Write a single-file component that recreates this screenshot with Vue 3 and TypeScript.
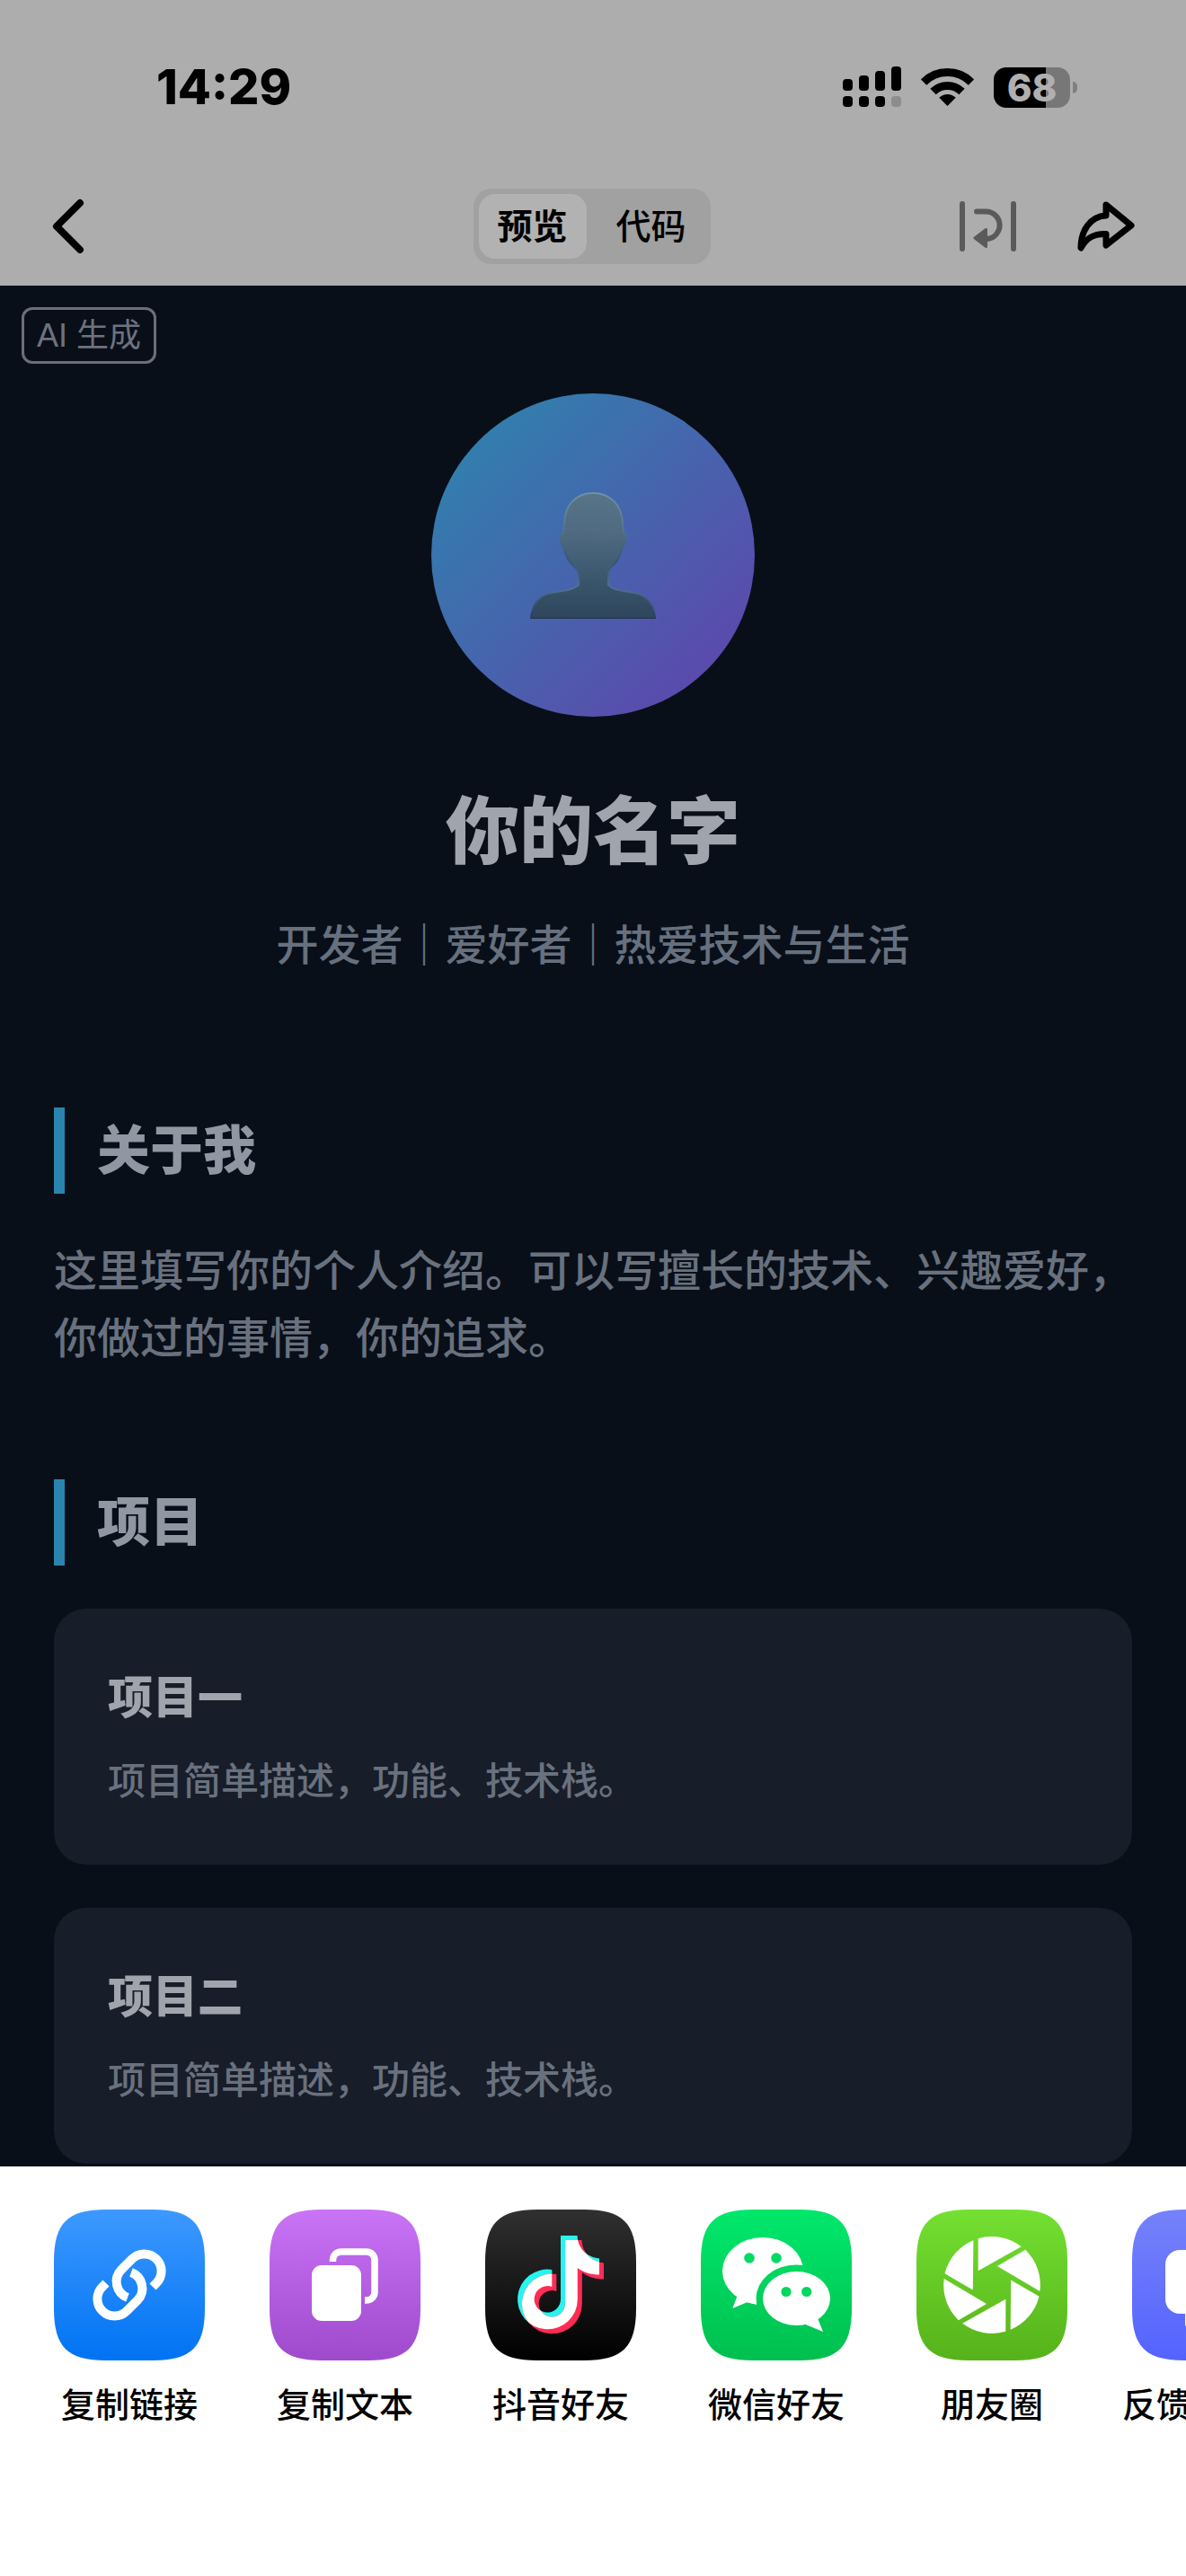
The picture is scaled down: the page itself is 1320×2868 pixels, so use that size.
<script setup lang="ts">
import { ref } from 'vue'

type IconName = 'link' | 'copy' | 'douyin' | 'wechat' | 'moments' | 'feedback'

interface ShareTarget {
  icon: IconName
  label: string
  from: string
  to: string
}

interface Project {
  title: string
  text: string
}

const tab = ref<'preview' | 'code'>('preview')

const signalBars = [
  { x: 0, y: 14 },
  { x: 18, y: 10 },
  { x: 36, y: 5 },
  { x: 54, y: 0 },
]

const projects: Project[] = [
  { title: '项目一', text: '项目简单描述，功能、技术栈。' },
  { title: '项目二', text: '项目简单描述，功能、技术栈。' },
]

const targets: ShareTarget[] = [
  { icon: 'link', label: '复制链接', from: '#3d99ff', to: '#0073f3' },
  { icon: 'copy', label: '复制文本', from: '#c973f6', to: '#9f4acd' },
  { icon: 'douyin', label: '抖音好友', from: '#303030', to: '#000000' },
  { icon: 'wechat', label: '微信好友', from: '#00e86c', to: '#00bf4f' },
  { icon: 'moments', label: '朋友圈', from: '#74e031', to: '#56b21a' },
  { icon: 'feedback', label: '反馈与建议', from: '#7682fa', to: '#5463ff' },
]

const tile = 'M0 58C0 15 15 0 58 0H110C153 0 168 15 168 58V110C168 153 153 168 110 168H58C15 168 0 153 0 110Z'
const chain = 'M82 98A19 19 0 0 1 75 67L87 55A19 19 0 0 1 114 82L110 86'
const note =
  'M84 29H102.5C103 43 113 53 127 54.5V72.5C118 72.5 109 70 102.8 65V100A33.4 33.4 0 1 1 74.3 66.9V86A14.7 14.7 0 1 0 84 100Z'
const blade = 'M68.7 32.2A54 54 0 0 1 116.7 41.3L68.7 68.3Z'
</script>

<template>
  <div class="screen">
    <header class="top">
      <div class="status">
        <span class="time">14:29</span>
        <div class="indicators">
          <svg class="signal" viewBox="0 0 65 46" aria-hidden="true">
            <g v-for="(bar, i) in signalBars" :key="bar.x">
              <rect :x="bar.x" :y="bar.y" width="11" :height="27 - bar.y" rx="4" />
              <rect :x="bar.x" y="33" width="11" height="12" rx="4" :fill="i === 3 ? '#8d8d8d' : '#000'" />
            </g>
          </svg>
          <svg class="wifi" viewBox="0 0 59 43" aria-hidden="true">
            <path d="M3 15.5A37.5 37.5 0 0 1 56 15.5" fill="none" stroke="#000" stroke-width="9" />
            <path d="M13.5 26A22.7 22.7 0 0 1 45.5 26" fill="none" stroke="#000" stroke-width="9" />
            <path d="M29.5 42L20.3 32.8A13 13 0 0 1 38.7 32.8Z" />
          </svg>
          <div class="battery"><span class="level">68</span><i class="nub"></i></div>
        </div>
      </div>
      <nav class="bar">
        <button class="icon-btn back" type="button" aria-label="返回">
          <svg width="48" height="72" viewBox="0 0 48 72">
            <path d="M38 10L12 36L38 62" fill="none" stroke="#000" stroke-width="8" stroke-linecap="round" stroke-linejoin="round" />
          </svg>
        </button>
        <div class="tabs">
          <button type="button" :class="['tab', { on: tab === 'preview' }]" @click="tab = 'preview'">预览</button>
          <button type="button" :class="['tab', { on: tab === 'code' }]" @click="tab = 'code'">代码</button>
        </div>
        <div class="actions">
          <button class="icon-btn" type="button" aria-label="自动换行">
            <svg width="72" height="72" viewBox="1061 215 72 72">
              <g fill="none" stroke="#5a5a5a" stroke-width="6" stroke-linecap="round">
                <path d="M1070 226V276M1127 226V276" />
                <path d="M1086 234.500H1096A15.300 15.300 0 0 1 1098 265" />
              </g>
              <path d="M1084 264L1096.500 254.500V273.500Z" fill="#5a5a5a" stroke="#5a5a5a" stroke-width="3" stroke-linejoin="round" />
            </svg>
          </button>
          <button class="icon-btn" type="button" aria-label="分享">
            <svg width="72" height="72" viewBox="1193 215 72 72">
              <path d="M1230 227L1258 250L1230 272V259.500C1216 259 1208 264 1202 275C1202 256 1212 240 1230 239Z" fill="none" stroke="#000" stroke-width="7" stroke-linejoin="round" />
            </svg>
          </button>
        </div>
      </nav>
    </header>

    <main class="page">
      <span class="badge">AI 生成</span>
      <section class="hero">
        <div class="avatar">
          <svg width="140" height="141" viewBox="0 0 140 141" aria-hidden="true">
            <defs>
              <linearGradient id="bust" x1="0" y1="0" x2="0" y2="1">
                <stop offset="0" stop-color="#587487" />
                <stop offset="0.3" stop-color="#506b82" />
                <stop offset="0.75" stop-color="#37536a" />
                <stop offset="1" stop-color="#2f465c" />
              </linearGradient>
              <linearGradient id="rim" x1="0" y1="0" x2="0" y2="1">
                <stop offset="0" stop-color="#6c93a6" />
                <stop offset="0.25" stop-color="#58788f" />
                <stop offset="0.55" stop-color="#35557a" />
                <stop offset="0.76" stop-color="#4f7394" />
                <stop offset="1" stop-color="#263c5c" />
              </linearGradient>
            </defs>
            <path
              d="M70 1C50 1 39 15 38 34L37 46C32 45 32 56 37 61C40 73 44 79 52 86C54 89 54 96 54 103C50 107 44 109 36 110L24 112C11 114 3 124 1 140H139C137 124 129 114 116 112L104 110C96 109 90 107 87 103C87 96 87 89 88 86C96 79 100 73 103 61C108 56 108 45 104 46L103 34C102 15 90 1 70 1Z"
              fill="url(#bust)"
              stroke="url(#rim)"
              stroke-width="2"
            />
          </svg>
        </div>
        <h1>你的名字</h1>
        <p class="tagline">开发者｜爱好者｜热爱技术与生活</p>
      </section>
      <section class="block">
        <h2>关于我</h2>
        <p class="about">这里填写你的个人介绍。可以写擅长的技术、兴趣爱好，你做过的事情，你的追求。</p>
      </section>
      <section class="block">
        <h2>项目</h2>
        <div class="cards">
          <article v-for="p in projects" :key="p.title" class="card">
            <h3>{{ p.title }}</h3>
            <p>{{ p.text }}</p>
          </article>
        </div>
      </section>
    </main>

    <footer class="sheet">
      <button v-for="t in targets" :key="t.icon" type="button" class="target">
        <svg class="tile" viewBox="0 0 168 168" aria-hidden="true">
          <defs>
            <linearGradient :id="'bg-' + t.icon" x1="0" y1="0" x2="0" y2="1">
              <stop offset="0" :stop-color="t.from" />
              <stop offset="1" :stop-color="t.to" />
            </linearGradient>
          </defs>
          <path :d="tile" :fill="`url(#bg-${t.icon})`" />
          <g v-if="t.icon === 'link'" fill="none" stroke="#fff" stroke-width="10">
            <path :d="chain" />
            <path :d="chain" transform="rotate(180 84 84)" />
          </g>
          <g v-else-if="t.icon === 'copy'">
            <rect x="47" y="62" width="55" height="62" rx="11" fill="#fff" />
            <path d="M70.500 58V56A9 9 0 0 1 79.500 47H108A9 9 0 0 1 117 56V92A9 9 0 0 1 108 101H106" fill="none" stroke="#fff" stroke-width="7.500" />
          </g>
          <g v-else-if="t.icon === 'douyin'">
            <clipPath id="note-clip"><path :d="note" /></clipPath>
            <path :d="note" fill="#28f3ee" />
            <path :d="note" transform="translate(5 5)" fill="#fe2c55" />
            <g clip-path="url(#note-clip)"><path :d="note" transform="translate(5 5)" fill="#fff" /></g>
          </g>
          <g v-else-if="t.icon === 'wechat'">
            <mask id="bubble-mask">
              <rect width="168" height="168" fill="#fff" />
              <ellipse cx="106.500" cy="99" rx="45" ry="37.500" fill="#000" />
              <circle cx="54" cy="54" r="5.800" fill="#000" />
              <circle cx="84" cy="54" r="5.800" fill="#000" />
            </mask>
            <g fill="#fff">
              <g mask="url(#bubble-mask)">
                <ellipse cx="69" cy="68.500" rx="45" ry="37.500" />
                <path d="M41 95L35.300 110L51.500 103.300L62 105.700L75 90Z" />
              </g>
              <ellipse cx="106.500" cy="99" rx="37.500" ry="30" />
              <path d="M116 127.700L136 136L130 121Z" />
            </g>
            <g fill="#00d75f">
              <circle cx="95" cy="91.500" r="5.600" />
              <circle cx="117.700" cy="91.500" r="5.600" />
            </g>
          </g>
          <g v-else-if="t.icon === 'moments'" fill="#fff">
            <path v-for="n in 6" :key="n" :d="blade" :transform="`rotate(${n * 60} 84 84)`" />
          </g>
          <path v-else d="M53 45H115A16 16 0 0 1 131 61V100A16 16 0 0 1 115 116H78L63 130Q59 132 59 127V116H53A16 16 0 0 1 37 100V61A16 16 0 0 1 53 45Z" fill="#fff" />
        </svg>
        <span class="label">{{ t.label }}</span>
      </button>
    </footer>
  </div>
</template>

<style>
body {
  margin: 0;
  background: #fff;
}
</style>

<style scoped>
.screen {
  display: flex;
  flex-direction: column;
  min-height: 100vh;
  overflow: hidden;
  font-family: Inter, "Noto Sans CJK SC", sans-serif;
}

h1,
h2,
h3,
p {
  margin: 0;
}

button {
  margin: 0;
  padding: 0;
  border: 0;
  background: none;
  color: inherit;
  font: inherit;
}

svg {
  display: block;
}

.top {
  background: #adadad;
  color: #000;
}

.status {
  display: flex;
  align-items: center;
  justify-content: space-between;
  height: 48px;
  padding: 73px 119px 65px 174px;
}

.time {
  font-size: 54px;
  font-weight: 800;
  line-height: 48px;
}

.indicators {
  display: flex;
  align-items: center;
}

.signal {
  width: 65px;
  height: 46px;
}

.wifi {
  width: 59px;
  height: 43px;
  margin: 0 22px;
}

.battery {
  position: relative;
  width: 85px;
  height: 45px;
  margin-right: 10px;
  border-radius: 14px;
  background: linear-gradient(90deg, #000 68%, #777 68%);
  color: #b0b0b0;
  font-size: 42px;
  font-weight: 800;
  line-height: 45px;
  text-align: center;
}

.nub {
  position: absolute;
  top: 16px;
  right: -8px;
  width: 5px;
  height: 13px;
  border-radius: 0 5px 5px 0;
  background: #808080;
}

.bar {
  display: grid;
  grid-template-columns: 1fr auto 1fr;
  align-items: center;
  height: 132px;
  padding: 0 54px 0 51px;
}

.icon-btn {
  width: 72px;
  height: 72px;
}

.tabs {
  display: flex;
  gap: 12px;
  padding: 6px;
  border-radius: 20px;
  background: #a1a1a1;
}

.tab {
  width: 120px;
  height: 72px;
  border-radius: 18px;
  font-size: 39px;
  font-weight: 500;
  line-height: 72px;
}

.tab.on {
  background: #b2b2b2;
  font-weight: 700;
}

.actions {
  display: flex;
  justify-content: flex-end;
  gap: 60px;
}

.page {
  position: relative;
  flex: 1;
  padding: 120px 60px 3px;
  background: #080f19;
}

.badge {
  position: absolute;
  top: 24px;
  left: 24px;
  padding: 0 14px;
  border: 3px solid #6b6f7b;
  border-radius: 12px;
  color: #6f727e;
  font-family: "Liberation Sans", "Noto Sans CJK SC", sans-serif;
  font-size: 36px;
  line-height: 57px;
}

.hero {
  display: flex;
  flex-direction: column;
  align-items: center;
}

.avatar {
  display: grid;
  place-items: center;
  width: 360px;
  height: 360px;
  border-radius: 50%;
  background: linear-gradient(135deg, #2a88ae, #6340ac);
}

h1 {
  margin: 62px 0 22px;
  color: #a0a4ac;
  font-size: 82px;
  font-weight: 900;
  line-height: 132px;
}

.tagline {
  color: #66707e;
  font-size: 47px;
  font-weight: 500;
  line-height: 75px;
}

.block {
  margin-top: 120px;
}

.hero + .block {
  margin-top: 144px;
}

h2 {
  margin-bottom: 48px;
  padding-left: 36px;
  border-left: 12px solid #2985af;
  color: #9096a2;
  font-size: 59px;
  font-weight: 900;
  line-height: 96px;
}

.about {
  color: #69717e;
  font-size: 48px;
  font-weight: 500;
  line-height: 75px;
}

.cards {
  display: grid;
  gap: 48px;
}

.card {
  padding: 60px;
  border-radius: 36px;
  background: #171d29;
}

h3 {
  margin-bottom: 20px;
  color: #a0a4ac;
  font-size: 50px;
  font-weight: 900;
  line-height: 79px;
}

.card p {
  color: #69717e;
  font-size: 42px;
  font-weight: 500;
  line-height: 66px;
}

.sheet {
  display: flex;
  padding: 48px 24px 164px;
  overflow-x: auto;
  scrollbar-width: none;
  background: #fff;
  color: #000;
}

.target {
  display: flex;
  flex: none;
  flex-direction: column;
  align-items: center;
  width: 240px;
}

.tile {
  width: 168px;
  height: 168px;
}

.label {
  margin-top: 22px;
  font-size: 38px;
  font-weight: 500;
  line-height: 54px;
}
</style>
